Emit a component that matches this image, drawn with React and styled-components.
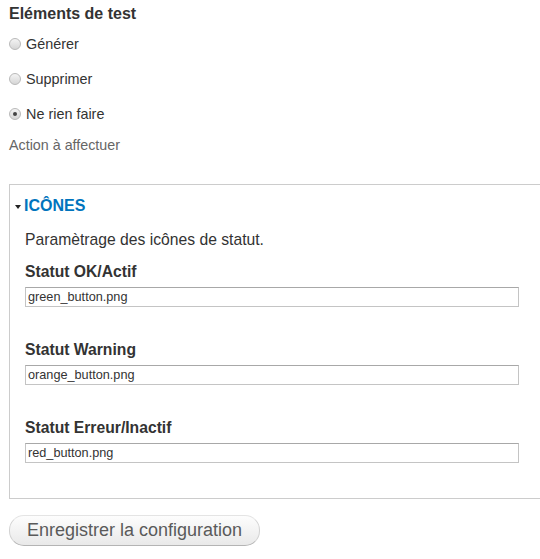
import React from 'react';
import styled, { createGlobalStyle } from 'styled-components';

const GlobalStyle = createGlobalStyle`
  html, body {
    margin: 0;
    padding: 0;
    background: #fff;
    overflow: hidden;
  }
  body {
    font-family: "Liberation Sans", Arial, sans-serif;
    color: #333;
  }
`;

const Page = styled.form`
  width: 540px;
  height: 559px;
  padding: 4px 0 0 9px;
  box-sizing: border-box;
  overflow: hidden;
`;

const Title = styled.h3`
  margin: 0;
  font-size: 16px;
  line-height: 20px;
  font-weight: bold;
  color: #333;
`;

const RadioList = styled.div`
  display: flex;
  flex-direction: column;
  gap: 15px;
  margin-top: 10px;
`;

const RadioRow = styled.label`
  display: flex;
  align-items: center;
  gap: 5px;
  font-size: 14.4px;
  line-height: 20px;
  color: #333;
`;

const RadioDot = styled.span`
  width: 10px;
  height: 10px;
  border-radius: 50%;
  border: 1px solid #b9b9b9;
  background: linear-gradient(#f4f4f4, #d6d6d6);
  display: flex;
  align-items: center;
  justify-content: center;
  flex: none;
  &::after {
    content: "";
    width: 4px;
    height: 4px;
    border-radius: 50%;
    background: ${p => (p.$checked ? '#444' : 'transparent')};
  }
`;

const Description = styled.div`
  margin-top: 11px;
  font-size: 14.3px;
  line-height: 20px;
  color: #666;
`;

const Fieldset = styled.section`
  margin-top: 29px;
  width: 560px;
  border: 1px solid #ccc;
  border-right: none;
  padding: 11px 0 19px 5px;
  box-sizing: border-box;
  height: 315px;
`;

const Legend = styled.a`
  display: flex;
  align-items: center;
  gap: 3px;
  font-size: 16px;
  line-height: 20px;
  font-weight: bold;
  text-transform: uppercase;
  color: #0074bd;
  text-decoration: none;
`;

const Arrow = styled.span`
  width: 0;
  height: 0;
  border-left: 3.5px solid transparent;
  border-right: 3.5px solid transparent;
  border-top: 4px solid #222;
  margin-top: 2px;
`;

const Content = styled.div`
  padding-left: 10px;
`;

const Intro = styled.p`
  margin: 14px 0 0;
  font-size: 15.7px;
  line-height: 20px;
  color: #333;
`;

const Field = styled.div`
  margin-top: ${p => p.$top}px;
`;

const Label = styled.label`
  display: block;
  font-size: 15.7px;
  line-height: 20px;
  font-weight: bold;
  color: #333;
`;

const TextInput = styled.input`
  display: block;
  margin-top: 5px;
  width: 494px;
  height: 20px;
  box-sizing: border-box;
  border: 1px solid #c4c4c4;
  border-top-color: #a8a8a8;
  padding: 0 2px;
  font-family: "Liberation Sans", Arial, sans-serif;
  font-size: 12.7px;
  color: #333;
  background: #fff;
  outline: none;
`;

const SubmitButton = styled.button`
  margin-top: 16px;
  height: 31px;
  padding: 0 17px;
  border-radius: 15px;
  border: 1px solid #e4e4e4;
  border-bottom-color: #b4b4b4;
  border-left-color: #d2d2d2;
  border-right-color: #d2d2d2;
  background: linear-gradient(#fdfdfd, #e9e9e9);
  font-family: "Liberation Sans", Arial, sans-serif;
  font-size: 18px;
  color: #5a5a5a;
  cursor: pointer;
`;

const options = [
  { label: 'Générer', checked: false },
  { label: 'Supprimer', checked: false },
  { label: 'Ne rien faire', checked: true },
];

const fields = [
  { label: 'Statut OK/Actif', value: 'green_button.png', top: 12 },
  { label: 'Statut Warning', value: 'orange_button.png', top: 33 },
  { label: 'Statut Erreur/Inactif', value: 'red_button.png', top: 33 },
];

export default function App() {
  return (
    <>
      <GlobalStyle />
      <Page onSubmit={e => e.preventDefault()}>
        <Title>Eléments de test</Title>
        <RadioList>
          {options.map(o => (
            <RadioRow key={o.label}>
              <RadioDot $checked={o.checked} />
              {o.label}
            </RadioRow>
          ))}
        </RadioList>
        <Description>Action à affectuer</Description>
        <Fieldset>
          <Legend href="#">
            <Arrow />
            Icônes
          </Legend>
          <Content>
            <Intro>Paramètrage des icônes de statut.</Intro>
            {fields.map(f => (
              <Field key={f.label} $top={f.top}>
                <Label>{f.label}</Label>
                <TextInput defaultValue={f.value} />
              </Field>
            ))}
          </Content>
        </Fieldset>
        <SubmitButton type="submit">Enregistrer la configuration</SubmitButton>
      </Page>
    </>
  );
}
